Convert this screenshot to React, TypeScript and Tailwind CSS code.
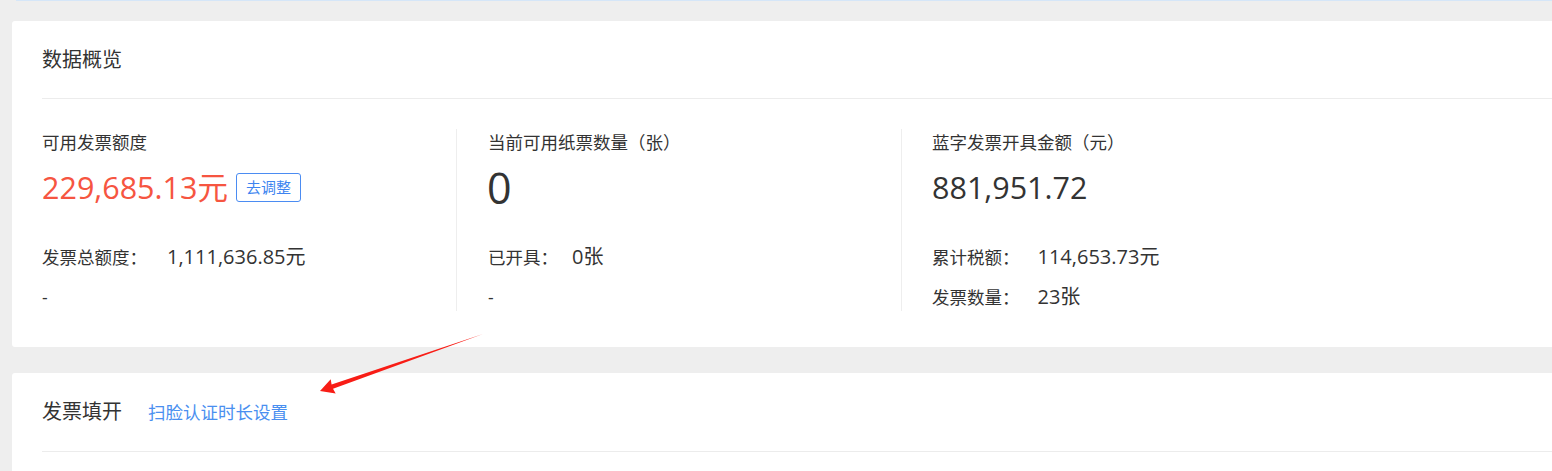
import React from "react";

const font = { fontFamily: '"Open Sans", "Noto Sans CJK SC", sans-serif' };

function Arrow() {
    return (
        <svg
            className="absolute left-0 top-0 pointer-events-none"
            width="1552"
            height="471"
            viewBox="0 0 1552 471"
        >
            <polygon
                points="320,391 330.7,379.3 331.6,384.6 483,334 333,388.8 335.7,393.5"
                fill="#f81d16"
            />
        </svg>
    );
}

function Row({ label, value, gap }: { label: string; value: string; gap: string }) {
    return (
        <div className="h-[40px] flex items-center text-[#333]">
            <span className="text-[17.5px]">{label}</span>
            <span className={`text-[20px] ${gap}`}>{value}</span>
        </div>
    );
}

export default function App() {
    return (
        <div className="relative w-[1552px] h-[471px] overflow-hidden bg-[#eeeeee]" style={font}>
            <div className="ml-[16px] h-px bg-[#d5e6f8]" />
            <div className="h-[20px]" />

            {/* 数据概览 */}
            <div className="ml-[12px] w-[1560px] bg-white rounded-[3px] pl-[30px]">
                <div className="h-[78px] flex items-center border-b border-[#ececec]">
                    <h2 className="text-[20px] text-[#333] font-normal">数据概览</h2>
                </div>
                <div className="flex pt-[30px] pb-[36px]">
                    <div className="w-[414px] h-[182px]">
                        <div className="h-[26px] flex items-center text-[17.5px] text-[#333]">可用发票额度</div>
                        <div className="mt-[12px] h-[40px] flex items-center">
                            <span className="text-[30.5px] text-[#f65541] leading-none">229,685.13元</span>
                            <button className="ml-[8px] h-[29px] px-[9px] border border-[#4b8cf2] rounded-[3px] text-[15px] text-[#3d84f0] bg-white">
                                去调整
                            </button>
                        </div>
                        <div className="h-[30px]" />
                        <Row label="发票总额度：" value="1,111,636.85元" gap="ml-[20px]" />
                        <div className="h-[40px] flex items-center text-[17.5px] text-[#333]">-</div>
                    </div>
                    <div className="w-[445px] h-[182px] border-l border-[#eeeeee] pl-[31px]">
                        <div className="h-[26px] flex items-center text-[17.5px] text-[#333]">当前可用纸票数量（张）</div>
                        <div className="mt-[12px] h-[40px] flex items-center">
                            <span className="text-[43px] text-[#333] leading-none -ml-[1px]">0</span>
                        </div>
                        <div className="h-[30px]" />
                        <Row label="已开具：" value="0张" gap="ml-[14px]" />
                        <div className="h-[40px] flex items-center text-[17.5px] text-[#333]">-</div>
                    </div>
                    <div className="flex-1 h-[182px] border-l border-[#eeeeee] pl-[30px]">
                        <div className="h-[26px] flex items-center text-[17.5px] text-[#333]">蓝字发票开具金额（元）</div>
                        <div className="mt-[12px] h-[40px] flex items-center">
                            <span className="text-[30.5px] text-[#333] leading-none">881,951.72</span>
                        </div>
                        <div className="h-[30px]" />
                        <Row label="累计税额：" value="114,653.73元" gap="ml-[18px]" />
                        <Row label="发票数量：" value="23张" gap="ml-[18px]" />
                    </div>
                </div>
            </div>

            <div className="h-[26px]" />

            {/* 发票填开 */}
            <div className="ml-[12px] w-[1560px] h-[200px] bg-white rounded-[3px] pl-[30px]">
                <div className="h-[79px] flex items-center border-b border-[#ececec]">
                    <h2 className="text-[20px] text-[#333] font-normal">发票填开</h2>
                    <a className="ml-[26px] text-[17.5px] text-[#4a8ff0] cursor-pointer">扫脸认证时长设置</a>
                </div>
            </div>

            <Arrow />
        </div>
    );
}
